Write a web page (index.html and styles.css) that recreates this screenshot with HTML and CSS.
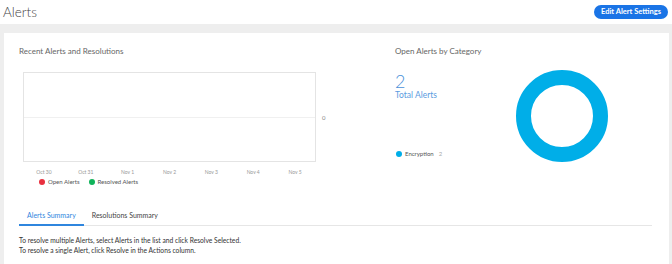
FILE: index.html
```html
<!DOCTYPE html>
<html lang="en">
<head>
  <meta charset="UTF-8">
  <meta name="viewport" content="width=device-width, initial-scale=1.0">
  <title>Alerts</title>
  <link rel="stylesheet" href="styles.css">
</head>
<body>
  <div class="header">
    <h1>Alerts</h1>
    <button class="edit-button">Edit Alert Settings</button>
  </div>

  <div class="card">
    <div class="overview">
      <div class="recent">
        <div class="section-title">Recent Alerts and Resolutions</div>
        <div class="chart-area">
          <div class="plot"><div class="midline"></div></div>
          <div class="y-label">0</div>
        </div>
        <div class="x-labels">
          <span>Oct 30</span>
          <span>Oct 31</span>
          <span>Nov 1</span>
          <span>Nov 2</span>
          <span>Nov 3</span>
          <span>Nov 4</span>
          <span>Nov 5</span>
        </div>
        <div class="legend">
          <span class="legend-item"><i class="dot red"></i>Open Alerts</span>
          <span class="legend-item"><i class="dot green"></i>Resolved Alerts</span>
        </div>
      </div>

      <div class="category">
        <div class="section-title">Open Alerts by Category</div>
        <div class="category-body">
          <div class="summary">
            <div class="total-count">2</div>
            <div class="total-label">Total Alerts</div>
            <div class="category-legend">
              <i class="dot blue"></i>Encryption <span class="count">2</span>
            </div>
          </div>
          <svg class="donut" width="92" height="92" viewBox="0 0 92 92">
            <circle cx="46" cy="46" r="38.5" fill="none" stroke="#00aee8" stroke-width="15"></circle>
          </svg>
        </div>
      </div>
    </div>

    <div class="tabs">
      <div class="tab active">Alerts Summary</div>
      <div class="tab">Resolutions Summary</div>
    </div>
    <div class="help-text">
      <p>To resolve multiple Alerts, select Alerts in the list and click Resolve Selected.</p>
      <p>To resolve a single Alert, click Resolve in the Actions column.</p>
    </div>
  </div>
</body>
</html>
```

FILE: styles.css
```css
body {
  margin: 0;
  background-color: #eeeeee;
  font-family: Lato, "Open Sans", sans-serif;
  color: #333333;
}

.header {
  display: flex;
  justify-content: space-between;
  align-items: center;
  height: 24px;
  padding: 0 4px 0 3px;
  background-color: #ffffff;
}

h1 {
  margin: 0;
  font-size: 13.5px;
  font-weight: 300;
  color: #444444;
}

.edit-button {
  height: 14px;
  padding: 0 7px;
  border: none;
  border-radius: 7px;
  background-color: #1a74e6;
  color: #ffffff;
  font-family: Lato, sans-serif;
  font-size: 7.5px;
  font-weight: 700;
  margin-top: -1px;
}

.card {
  margin: 9px 3px 0 4px;
  padding: 12px 17px 0 15px;
  background-color: #ffffff;
  height: 219px;
}

.overview {
  display: flex;
}

.recent {
  width: 376px;
}

.category {
  flex: 1;
}

.section-title {
  height: 12px;
  line-height: 12px;
  font-size: 8px;
  color: #666666;
}

/* line chart */
.chart-area {
  display: flex;
  align-items: center;
  margin-top: 15px;
  padding-left: 4px;
}

.plot {
  position: relative;
  width: 291px;
  height: 88px;
  border: 1px solid #e4e4e4;
}

.midline {
  position: absolute;
  left: 0;
  right: 0;
  top: 44px;
  border-top: 1px solid #f0f0f0;
}

.y-label {
  margin-left: 6px;
  font-size: 6px;
  color: #888888;
}

.x-labels {
  display: grid;
  grid-template-columns: repeat(7, 1fr);
  width: 293px;
  margin: 6px 0 0 4px;
  line-height: 8px;
  font-size: 5px;
  color: #999999;
  text-align: center;
}

.legend {
  display: flex;
  gap: 9px;
  margin: 2px 0 0 20px;
  line-height: 8px;
  font-size: 6px;
  color: #555555;
}

.legend-item {
  display: flex;
  align-items: center;
}

.dot {
  display: inline-block;
  width: 6px;
  height: 6px;
  border-radius: 50%;
  margin-right: 3px;
}

.dot.red { background-color: #e8303f; }
.dot.green { background-color: #10b35a; }
.dot.blue { background-color: #00aee8; }

/* category donut */
.category-body {
  display: flex;
  margin-top: 13px;
}

.summary {
  display: flex;
  flex-direction: column;
  width: 121px;
  height: 92px;
}

.total-count {
  margin-top: 2px;
  line-height: 18px;
  font-size: 18px;
  font-weight: 300;
  color: #4a90d9;
}

.total-label {
  line-height: 11px;
  font-size: 8.5px;
  color: #5a9be0;
}

.category-legend {
  display: flex;
  align-items: center;
  margin-top: auto;
  margin-bottom: 4px;
  padding-left: 1px;
  line-height: 8px;
  font-size: 6px;
  color: #555555;
}

.category-legend .count {
  margin-left: 5px;
  color: #aaaaaa;
}

/* tabs */
.tabs {
  display: flex;
  margin-top: 20px;
  border-bottom: 1px solid #e6e6e6;
}

.tab {
  height: 18px;
  line-height: 18px;
  padding: 0 8px;
  font-size: 7px;
  color: #444444;
}

.tab.active {
  color: #2f86de;
  border-bottom: 2px solid #2f86de;
  margin-bottom: -1px;
}

.help-text {
  margin-top: 9px;
  font-size: 6.7px;
  line-height: 10px;
  color: #333333;
}

.help-text p {
  margin: 0;
}
```
